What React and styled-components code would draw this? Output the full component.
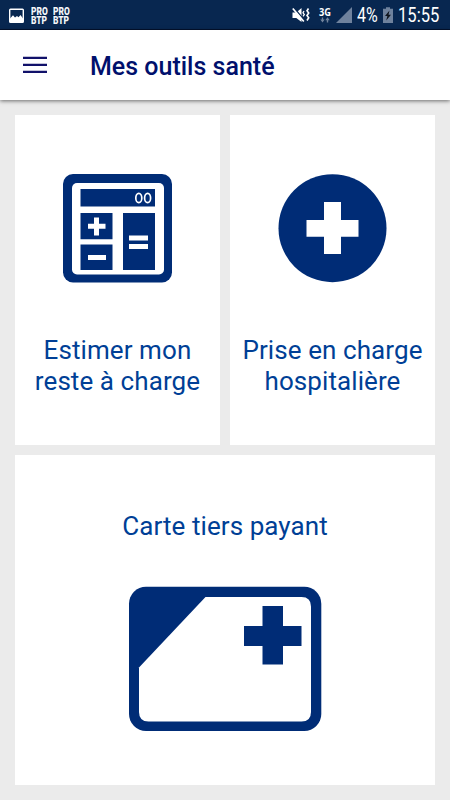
import React from 'react';
import styled, {createGlobalStyle} from 'styled-components';

const NAVY = '#002c76';

const GlobalStyle = createGlobalStyle`
    body{
        margin : 0;
        background : #ebebeb;
        font-family : Roboto, "Liberation Sans", sans-serif;
    }
    svg{
        display : block;
        flex : none;
        overflow : visible;
    }
`;

const MainContainer = styled.div`
    width : 450px;
    height : 800px;
    display : flex;
    flex-direction : column;
    overflow : hidden;
    background : #ebebeb;
`;

const StatusBar = styled.div`
    box-sizing : border-box;
    height : 30px;
    flex : none;
    display : flex;
    justify-content : space-between;
    padding : 0 10px 0 9px;
    background : #082750;
    border-bottom : 1px solid #03122e;
`;

const StatusGroup = styled.div`
    display : flex;
    align-items : center;
    padding-top : 2px;
`;

const StatusSlot = styled.div`
    width : ${props => props.$width}px;
    margin-left : ${props => props.$gap || 0}px;
    flex : none;
`;

const StatusText = styled.span`
    display : block;
    width : max-content;
    font-size : 19.5px;
    line-height : 26px;
    color : #fff;
    transform : scaleX(${props => props.$squeeze});
    transform-origin : left center;
`;

const BadgeText = styled.div`
    width : max-content;
    font-family : Roboto, sans-serif;
    font-size : 10px;
    font-weight : 900;
    line-height : 9px;
    color : #f4f6f9;
    transform : scaleX(0.84);
    transform-origin : left center;
    span{
        display : block;
        height : 9px;
    }
`;

const AppHeader = styled.div`
    height : 70px;
    flex : none;
    display : flex;
    align-items : center;
    padding-left : 23px;
    background : #fff;
    box-shadow : 0 1px 4px rgba(0,0,0,0.55);
`;

const Title = styled.h1`
    margin : 4px 0 0 43px;
    font-size : 25px;
    font-weight : 500;
    line-height : 30px;
    color : #00106c;
`;

const ToolGrid = styled.div`
    display : grid;
    grid-template-columns : 1fr 1fr;
    grid-template-rows : 330px 330px;
    gap : 10px;
    padding : 15px;
`;

const ToolCard = styled.div`
    grid-column : ${props => props.$wide ? '1 / -1' : 'auto'};
    display : flex;
    flex-direction : column;
    align-items : center;
    gap : ${props => props.$wide ? 44 : 52}px;
    padding-top : ${props => props.$wide ? 56 : 58}px;
    background : #fff;
`;

const ToolLabel = styled.p`
    margin : 0;
    font-size : 26px;
    letter-spacing : 0.08px;
    line-height : 31px;
    text-align : center;
    white-space : pre-line;
    color : #003f96;
`;

function PictureIcon(){
    return(
        <svg width="15" height="14" viewBox="0 0 15 14">
            <rect x="0.7" y="0.2" width="13.6" height="13" rx="0.8" fill="none" stroke="#fff" strokeWidth="1.4"/>
            <path d="M1 13V9.500L4 6.300l2 2.200 2-1.500 1.500 1.300L11.500 6 14 9.500V13z" fill="#fff"/>
        </svg>
    )
}

function ProBtpIcon(){
    return(
        <BadgeText>
            <span>PRO</span>
            <span>BTP</span>
        </BadgeText>
    )
}

function MuteVibrateIcon(){
    return(
        <svg width="18" height="17" viewBox="0 0 18 17">
            <path d="M0.500 5.500h3.800L9.500 1v14l-5.200-4H0.500z" fill="#fff"/>
            <path d="M2.200 1l9.500 11.500" stroke="#082750" strokeWidth="1.400"/>
            <path d="M0.800 1.500l11 13" stroke="#fff" strokeWidth="1.700"/>
            <path d="M12 4l-1 1.800 1.300 1.800-1.300 1.800" fill="none" stroke="#fff" strokeWidth="1.300"/>
            <path d="M16.500 1.500l-1.500 2.300 1.700 2.300-1.700 2.300 1.700 2.300-1.700 2.800" fill="none" stroke="#fff" strokeWidth="1.600"/>
        </svg>
    )
}

function NetworkIcon(){
    return(
        <svg width="13" height="16" viewBox="0 0 13 16">
            <text x="0" y="7.500" fill="#fff" fontFamily="Open Sans, sans-serif" fontWeight="700" fontSize="10.500" textLength="12" lengthAdjust="spacingAndGlyphs">3G</text>
            <path d="M3.500 9.500v3M8.500 11.500v3" stroke="#71839d" strokeWidth="1.400"/>
            <path d="M1.300 11.500h4.400l-2.200 3zM6.300 12.300h4.400l-2.200-3z" fill="#71839d"/>
        </svg>
    )
}

function SignalIcon(){
    return(
        <svg width="16" height="16" viewBox="0 0 16 16">
            <path d="M16 -1v16H0z" fill="#6f829d"/>
        </svg>
    )
}

function BatteryIcon(){
    return(
        <svg width="10" height="16" viewBox="0 0 10 16">
            <path d="M3 -0.800h4v1.500h3V15H0V0.700h3z" fill="#6f829d"/>
            <path d="M6.500 2.500L2 8h2.400l-1.200 4.500L8 6.700H5.500z" fill="#10151d"/>
        </svg>
    )
}

function MenuIcon(){
    return(
        <svg width="24" height="16" viewBox="0 0 24 16">
            <path d="M0 0.900h24M0 7.900h24M0 14.900h24" stroke="#11116a" strokeWidth="2.300"/>
        </svg>
    )
}

function CalculatorIcon(){
    return(
        <svg width="109" height="110" viewBox="0 0 109 110">
            <rect x="0" y="1" width="109" height="108.500" rx="10" fill={NAVY}/>
            <rect x="9" y="10" width="92" height="91.500" rx="5" fill="#fff"/>
            <path d="M17.500 16h74.500v17.500H17.500zM17.500 40h32v26.300h-32zM17.500 71.500h32V97h-32zM60 40h32v57H60z" fill={NAVY}/>
            <path d="M33.500 44.500v18M25 53.300h17.500M25 84.500h18M66 65h19M66 73.500h19" stroke="#fff" strokeWidth="5"/>
            <g fill="none" stroke="#fff" strokeWidth="1.700">
                <ellipse cx="75.800" cy="25" rx="3" ry="4.700"/>
                <ellipse cx="84.600" cy="25" rx="3" ry="4.700"/>
            </g>
        </svg>
    )
}

function HospitalIcon(){
    return(
        <svg width="109" height="110" viewBox="0 0 109 110">
            <circle cx="54.500" cy="55.200" r="54" fill={NAVY}/>
            <path d="M46 29h17v18h17.500v16.700H63V81H46V63.700H28.500V47H46z" fill="#fff"/>
        </svg>
    )
}

function CardIcon(){
    return(
        <svg width="194" height="146" viewBox="0 0 194 146">
            <rect x="1" y="0.800" width="192.300" height="144.200" rx="17" fill={NAVY}/>
            <path d="M77.500 11H173.500Q183 11 183 20.500V126Q183 135.500 173.500 135.500H20.500Q11 135.500 11 126V81.500z" fill="#fff"/>
            <path d="M134.500 20h20.500v20h18.500v20H155v18.500h-20.500V60H116V40h18.500z" fill={NAVY}/>
        </svg>
    )
}

// 도구 목록 화면
function App(){
    return(
        <MainContainer>
            <GlobalStyle/>
            <StatusBar>
                <StatusGroup>
                    <StatusSlot $width={15}><PictureIcon/></StatusSlot>
                    <StatusSlot $width={18} $gap={6.500}><ProBtpIcon/></StatusSlot>
                    <StatusSlot $width={18} $gap={4.500}><ProBtpIcon/></StatusSlot>
                </StatusGroup>
                <StatusGroup>
                    <StatusSlot $width={18}><MuteVibrateIcon/></StatusSlot>
                    <StatusSlot $width={13} $gap={9}><NetworkIcon/></StatusSlot>
                    <StatusSlot $width={16} $gap={4}><SignalIcon/></StatusSlot>
                    <StatusSlot $width={21} $gap={5}><StatusText $squeeze={0.820}>4%</StatusText></StatusSlot>
                    <StatusSlot $width={10} $gap={5}><BatteryIcon/></StatusSlot>
                    <StatusSlot $width={42} $gap={5}><StatusText $squeeze={0.850}>15:55</StatusText></StatusSlot>
                </StatusGroup>
            </StatusBar>
            <AppHeader>
                <MenuIcon/>
                <Title>Mes outils santé</Title>
            </AppHeader>
            <ToolGrid>
                <ToolCard>
                    <CalculatorIcon/>
                    <ToolLabel>{'Estimer mon\nreste à charge'}</ToolLabel>
                </ToolCard>
                <ToolCard>
                    <HospitalIcon/>
                    <ToolLabel>{'Prise en charge\nhospitalière'}</ToolLabel>
                </ToolCard>
                <ToolCard $wide>
                    <ToolLabel>Carte tiers payant</ToolLabel>
                    <CardIcon/>
                </ToolCard>
            </ToolGrid>
        </MainContainer>
    )
}

export default App;
